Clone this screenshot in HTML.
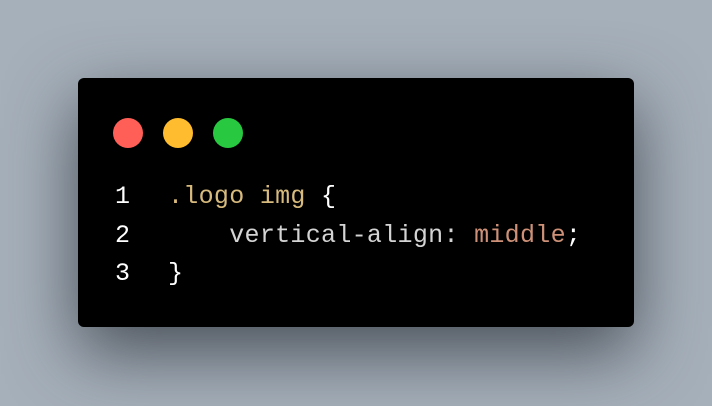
<!DOCTYPE html>
<html><head><style>
html,body{margin:0;width:712px;height:406px;overflow:hidden;background:#a6b0ba;}
.card{position:absolute;left:78px;top:78px;width:556px;height:249px;background:#000;border-radius:6px;box-shadow:0 25px 70px rgba(40,45,55,0.75);}
.dot{position:absolute;top:40px;width:30px;height:30px;border-radius:50%;}
.code{position:absolute;left:0;top:100px;font-family:"Liberation Mono",monospace;font-size:25px;line-height:38.5px;color:#fff;letter-spacing:0.3px;}
.ln{position:absolute;left:37px;top:0;white-space:pre;}
.tx{position:absolute;left:90px;top:0;white-space:pre;}
.y{color:#d7ba7d}.w{color:#d4d4d4}.o{color:#ce9178}
</style></head><body>
<div class="card">
<div class="dot" style="left:35px;background:#ff5f57"></div>
<div class="dot" style="left:85px;background:#febc2e"></div>
<div class="dot" style="left:135px;background:#28c840"></div>
<div class="code"><div class="ln">1<br>2<br>3</div><div class="tx"><span class="y">.logo img</span> {<br><span class="w">    vertical-align:</span> <span class="o">middle</span>;<br>}</div></div>
</div>
</body></html>
